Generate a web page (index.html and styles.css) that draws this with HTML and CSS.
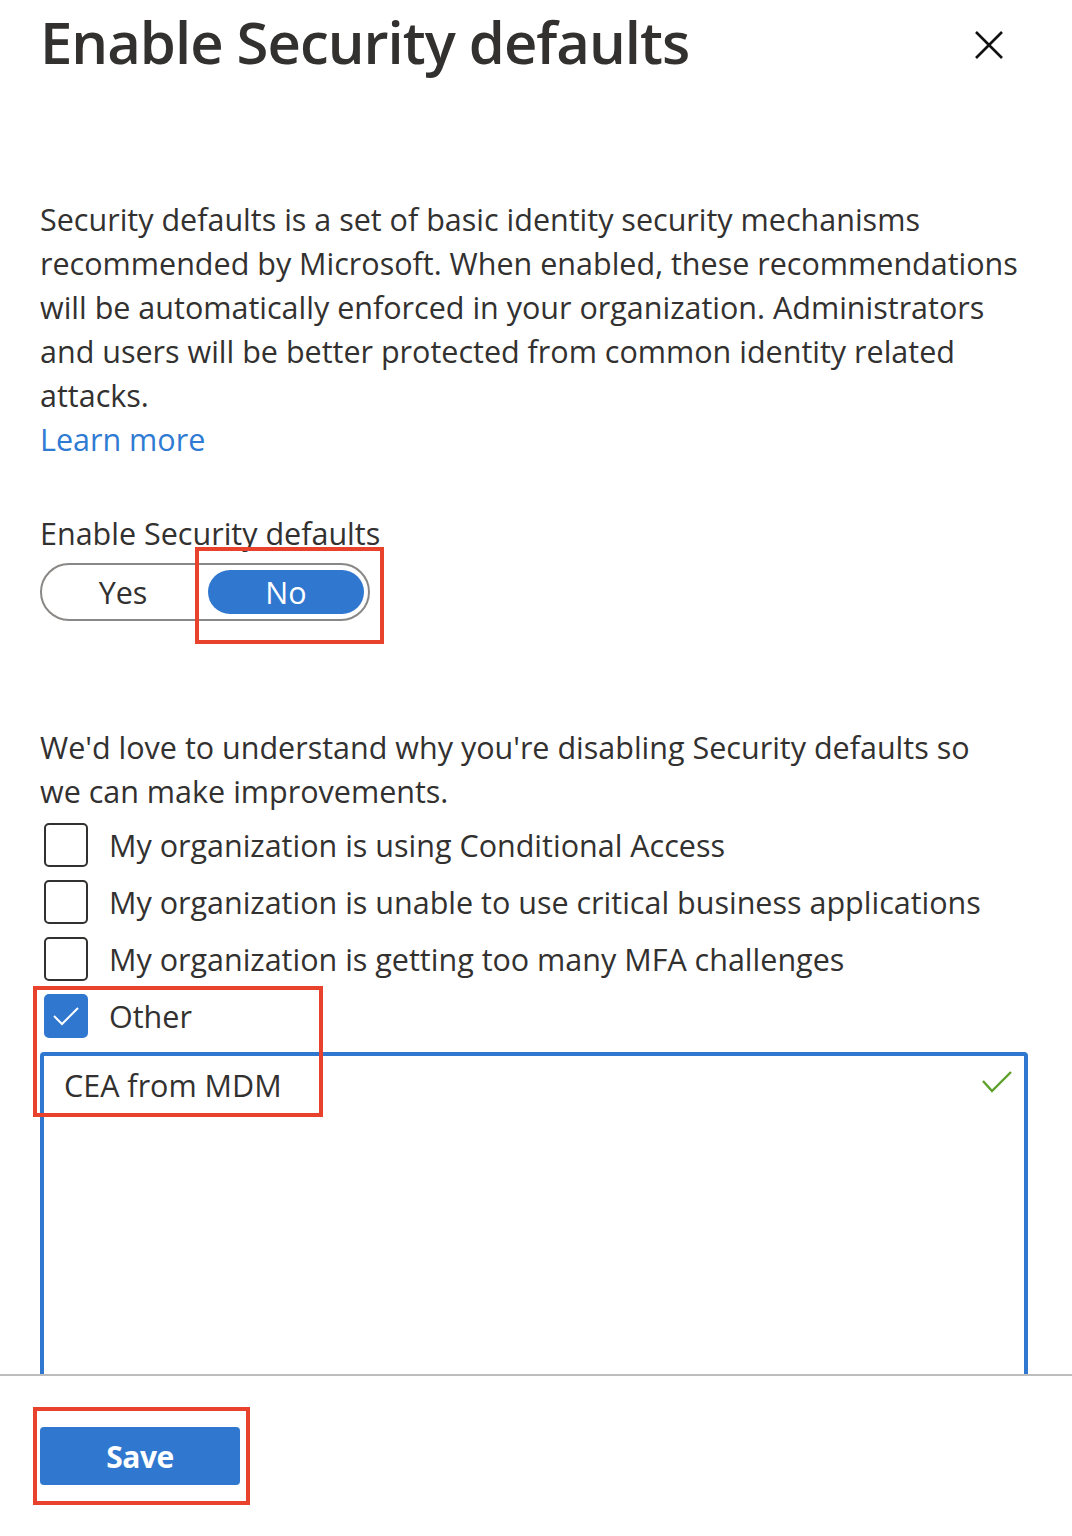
FILE: index.html
```html
<!DOCTYPE html>
<html lang="en">
<head>
    <meta charset="UTF-8">
    <meta name="viewport" content="width=device-width, initial-scale=1.0">
    <title>Enable Security defaults</title>
    <link rel="stylesheet" href="styles.css">
</head>
<body>
    <div class="panel">
        <div class="scroll">
            <header class="head">
                <h1>Enable Security defaults</h1>
                <svg class="close" width="28" height="28" viewBox="0 0 28 28">
                    <path d="M1 1 L27 27 M27 1 L1 27" stroke="#111" stroke-width="2.6" fill="none"/>
                </svg>
            </header>

            <p class="intro">
                Security defaults is a set of basic identity security mechanisms<br>
                recommended by Microsoft. When enabled, these recommendations<br>
                will be automatically enforced in your organization. Administrators<br>
                and users will be better protected from common identity related<br>
                attacks.<br>
                <a href="#">Learn more</a>
            </p>

            <div class="field-label">Enable Security defaults</div>
            <div class="toggle">
                <span class="opt">Yes</span>
                <span class="opt on">No</span>
                <span class="mark mark-no"></span>
            </div>

            <p class="ask">We'd love to understand why you're disabling Security defaults so<br>we can make improvements.</p>

            <div class="reasons">
                <div class="row"><span class="box"></span>My organization is using Conditional Access</div>
                <div class="row"><span class="box"></span>My organization is unable to use critical business applications</div>
                <div class="row"><span class="box"></span>My organization is getting too many MFA challenges</div>
                <div class="other">
                    <div class="row">
                        <span class="box checked">
                            <svg width="28" height="20" viewBox="0 0 28 20"><path d="M2 10 L10 18 L26 2" stroke="#fff" stroke-width="2" fill="none"/></svg>
                        </span>Other
                    </div>
                    <div class="textbox">
                        CEA from MDM
                        <svg class="ok" width="30" height="24" viewBox="0 0 30 24"><path d="M1 11 L10 21 L29 2" stroke="#5ea02c" stroke-width="2.4" fill="none"/></svg>
                    </div>
                    <span class="mark mark-other"></span>
                </div>
            </div>
        </div>

        <footer class="foot">
            <div class="save-wrap">
                <button class="save">Save</button>
                <span class="mark mark-save"></span>
            </div>
        </footer>
    </div>
</body>
</html>
```

FILE: styles.css
```css
body {
    margin: 0;
    background: #fff;
    font-family: "Open Sans", "Noto Sans", sans-serif;
    color: #323130;
}

.panel {
    width: 1072px;
    height: 1536px;
}

.scroll {
    height: 1374px;
    overflow: hidden;
    padding: 0 44px 0 40px;
    border-bottom: 2px solid #bdbdbd;
}

.head {
    display: flex;
    justify-content: space-between;
    align-items: flex-start;
}

h1 {
    margin: 0;
    font-size: 58px;
    font-weight: 600;
    line-height: 84px;
    letter-spacing: -1px;
    color: #323130;
}

.close {
    margin-top: 31px;
    margin-right: 25px;
}

.intro, .ask {
    margin: 113px 0 0;
    font-size: 30.5px;
    line-height: 44px;
    white-space: nowrap;
}

.intro a {
    color: #2f7bd3;
    text-decoration: none;
}

.field-label {
    margin-top: 50px;
    font-size: 30.5px;
    line-height: 44px;
}

.toggle {
    position: relative;
    margin-top: 8px;
    width: 330px;
    height: 58px;
    box-sizing: border-box;
    border: 2px solid #8a8886;
    border-radius: 29px;
    display: flex;
    align-items: center;
    padding: 0 4px;
}

.opt {
    flex: 1;
    text-align: center;
    font-size: 30.5px;
    line-height: 44px;
}

.opt.on {
    flex: none;
    width: 156px;
    margin-left: 8px;
    background: #3078cf;
    color: #fff;
    border-radius: 22px;
}

.mark {
    position: absolute;
    border: 4px solid #e8412c;
    box-sizing: border-box;
}

.mark-no {
    left: 153px;
    top: -18px;
    width: 189px;
    height: 97px;
}

.ask {
    margin-top: 104px;
}

.reasons {
    margin-top: 3px;
}

.row {
    display: flex;
    align-items: center;
    height: 57px;
    font-size: 30.5px;
}

.box {
    width: 44px;
    height: 44px;
    box-sizing: border-box;
    margin: 0 21px 0 4px;
    border: 2px solid #323130;
    border-radius: 5px;
    display: flex;
    align-items: center;
    justify-content: center;
}

.box.checked {
    background: #3078cf;
    border-color: #3078cf;
}

.other {
    position: relative;
}

.textbox {
    position: relative;
    margin-top: 8px;
    height: 420px;
    border: 4px solid #3078cf;
    border-radius: 4px;
    padding: 7px 20px;
    font-size: 30.5px;
    line-height: 44px;
}

.ok {
    position: absolute;
    right: 12px;
    top: 14px;
}

.mark-other {
    left: -7px;
    top: -1px;
    width: 290px;
    height: 131px;
}

.foot {
    padding: 51px 40px 0;
}

.save-wrap {
    position: relative;
    width: 200px;
}

.save {
    display: block;
    width: 200px;
    height: 58px;
    border: none;
    border-radius: 4px;
    background: #3078cf;
    color: #fff;
    font-family: "Open Sans", sans-serif;
    font-size: 30px;
    font-weight: 700;
    letter-spacing: -0.5px;
}

.mark-save {
    left: -7px;
    top: -20px;
    width: 217px;
    height: 98px;
}
```
